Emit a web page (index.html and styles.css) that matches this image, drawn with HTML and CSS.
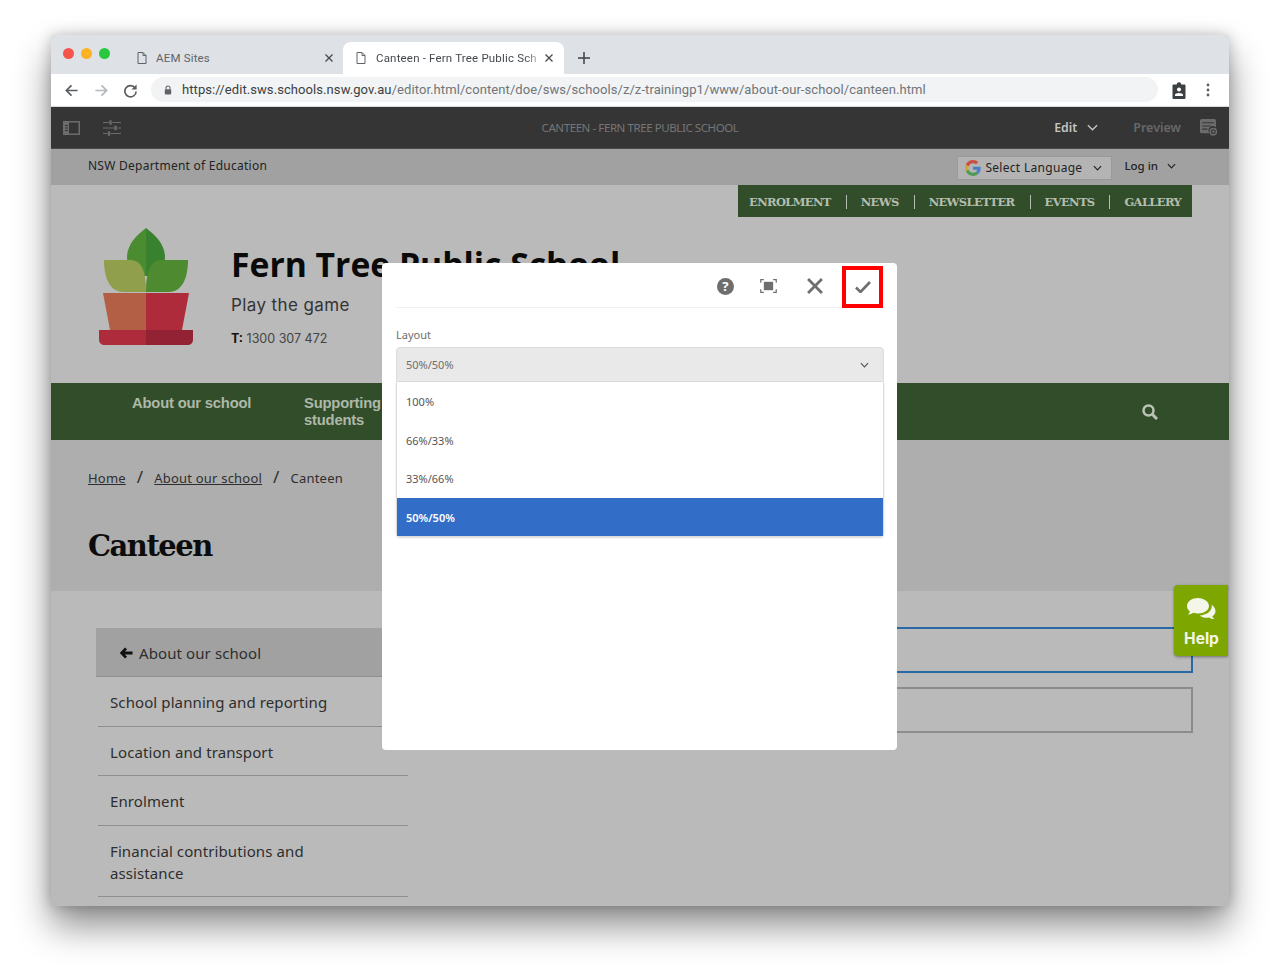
FILE: index.html
```html
<!DOCTYPE html>
<html lang="en">
<head>
  <meta charset="UTF-8" />
  <meta name="viewport" content="width=device-width, initial-scale=1.0"/>
  <title>Canteen - Fern Tree Public School</title>
  <link rel="stylesheet" href="styles.css">
</head>
<body>

  <div class="window">

    <div class="tabstrip">
      <div class="lights">
        <span class="light red"></span>
        <span class="light yellow"></span>
        <span class="light green"></span>
      </div>
      <div class="tab">
        <svg class="doc" viewBox="0 0 10 12"><path d="M1 .5h5l3 3v8H1zM6 .5v3h3" fill="none" stroke="#5f6368"/></svg>
        <span class="tab-title">AEM Sites</span>
        <svg class="tab-x" viewBox="0 0 8 8"><path d="M.5.5l7 7M7.500.5l-7 7" stroke="#45494d" stroke-width="1.300"/></svg>
      </div>
      <div class="tab active">
        <svg class="doc" viewBox="0 0 10 12"><path d="M1 .5h5l3 3v8H1zM6 .5v3h3" fill="none" stroke="#5f6368"/></svg>
        <span class="tab-title">Canteen - Fern Tree Public Sch</span>
        <svg class="tab-x" viewBox="0 0 8 8"><path d="M.5.5l7 7M7.500.5l-7 7" stroke="#45494d" stroke-width="1.300"/></svg>
      </div>
      <svg class="newtab" viewBox="0 0 12 12"><path d="M6 0v12M0 6h12" stroke="#3c4043" stroke-width="1.500"/></svg>
    </div>

    <div class="toolbar">
      <svg class="nav-ic" viewBox="0 0 16 16"><path d="M14.500 8H2.500M8 2.500 2.500 8 8 13.500" fill="none" stroke="#5a5d61" stroke-width="1.800"/></svg>
      <svg class="nav-ic" viewBox="0 0 16 16"><path d="M1.500 8h12M8 2.500 13.500 8 8 13.500" fill="none" stroke="#b4b7bb" stroke-width="1.800"/></svg>
      <svg class="nav-ic reload" viewBox="0 0 16 16"><path d="M13 5.500A6 6 0 1 0 14 9" fill="none" stroke="#5a5d61" stroke-width="1.800"/><path d="M14.500 1.500v5.500H9z" fill="#5a5d61"/></svg>
      <div class="url">
        <svg class="lock" viewBox="0 0 10 12"><path d="M2.500 5V3.500a2.500 2.500 0 0 1 5 0V5" fill="none" stroke="#5f6368" stroke-width="1.300"/><rect x="1" y="5" width="8" height="6.500" rx="1" fill="#5f6368"/></svg>
        <span class="url-text"><span class="url-host">https://edit.sws.schools.nsw.gov.au</span>/editor.html/content/doe/sws/schools/z/z-trainingp1/www/about-our-school/canteen.html</span>
      </div>
      <svg class="clip" viewBox="0 0 14 17"><path d="M1.500 2.500h3.200a2.300 2.300 0 0 1 4.600 0h3.200a1 1 0 0 1 1 1V16a1 1 0 0 1-1 1h-11a1 1 0 0 1-1-1V3.500a1 1 0 0 1 1-1z" fill="#3c4043"/><circle cx="7" cy="7.600" r="2" fill="#fff"/><path d="M3 14v-1.200c0-1.200 2.400-1.900 4-1.900s4 .7 4 1.900V14z" fill="#fff"/></svg>
      <svg class="dots" viewBox="0 0 4 14"><circle cx="2" cy="2" r="1.400" fill="#5a5d61"/><circle cx="2" cy="7" r="1.400" fill="#5a5d61"/><circle cx="2" cy="12" r="1.400" fill="#5a5d61"/></svg>
    </div>

    <div class="editor-bar">
      <svg class="side-ic" viewBox="0 0 17 14"><rect x=".75" y=".75" width="15.500" height="12.500" fill="none" stroke="#6c6c6c" stroke-width="1.500"/><path d="M1 1h5v12H1z" fill="#6c6c6c"/><path d="M2 4.500h3M2 7h3M2 9.500h3" stroke="#353535"/></svg>
      <svg class="slider-ic" viewBox="0 0 18 16"><path d="M0 2.500h18M0 8h18M0 13.500h18" stroke="#6c6c6c" stroke-width="1.200" fill="none"/><path d="M6 0h3v5H6zM11 5.500h3v5h-3zM4.500 11h3v5h-3z" fill="#6c6c6c" stroke="#353535" stroke-width=".6"/></svg>
      <div class="page-name">CANTEEN - FERN TREE PUBLIC SCHOOL</div>
      <span class="edit-btn">Edit</span>
      <svg class="edit-chev" viewBox="0 0 12 7"><path d="M1 1l5 5 5-5" fill="none" stroke="#c4c4c4" stroke-width="1.500"/></svg>
      <span class="preview-btn">Preview</span>
      <svg class="notes-ic" viewBox="0 0 16 16"><path d="M1.500 0h12A1.500 1.500 0 0 1 15 1.500V8a4 4 0 0 0-6 5.500H1.500A1.500 1.500 0 0 1 0 12V1.500A1.500 1.500 0 0 1 1.500 0z" fill="#6c6c6c"/><path d="M2 3.500h11M2 6.500h8M2 9.500h5" stroke="#353535"/><circle cx="12.500" cy="12" r="3" fill="none" stroke="#6c6c6c" stroke-width="1.300"/><path d="M12.500 10.500v3M11 12h3" stroke="#6c6c6c"/></svg>
    </div>

    <div class="page">
      <div class="topbar">
        <span class="dept">NSW Department of Education</span>
        <div class="lang">
          <svg class="g-logo" viewBox="0 0 48 48"><path fill="#c9503f" d="M24 9.500c3.500 0 6.700 1.300 9.100 3.500l6.800-6.800C35.800 2.400 30.200 0 24 0 14.600 0 6.500 5.400 2.600 13.200l7.900 6.100C12.400 13.700 17.700 9.500 24 9.500z"/><path fill="#4a7fc4" d="M47 24.500c0-1.600-.1-3.100-.4-4.500H24v9h13c-.6 3-2.300 5.500-4.800 7.200l7.700 6c4.500-4.200 7.100-10.300 7.100-17.700z"/><path fill="#d3a62f" d="M10.500 28.700A14.500 14.500 0 0 1 10.500 19.300l-7.900-6.100a24 24 0 0 0 0 21.600z"/><path fill="#4f9a55" d="M24 48c6.500 0 11.900-2.100 15.900-5.800l-7.700-6c-2.200 1.400-4.900 2.300-8.200 2.300-6.300 0-11.600-4.200-13.500-9.800l-7.900 6.100C6.500 42.600 14.600 48 24 48z"/></svg>
          <span class="lang-text">Select Language</span>
          <svg class="mini-chev" viewBox="0 0 10 6"><path d="M1 1l4 4 4-4" fill="none" stroke="#222" stroke-width="1.300"/></svg>
        </div>
        <span class="login">Log in</span>
        <svg class="mini-chev" viewBox="0 0 10 6"><path d="M1 1l4 4 4-4" fill="none" stroke="#222" stroke-width="1.300"/></svg>
      </div>

      <div class="quicklinks-row">
        <ul class="quicklinks">
          <li>ENROLMENT</li>
          <li>NEWS</li>
          <li>NEWSLETTER</li>
          <li>EVENTS</li>
          <li>GALLERY</li>
        </ul>
      </div>

      <div class="masthead">
        <svg class="school-logo" viewBox="0 0 94 117">
          <path d="M47 0C38 7 29 15 28 28c0 8 3 14 8 20h11z" fill="#4c8c31"/>
          <path d="M47 0c9 7 18 15 19 28 0 8-3 14-8 20H47z" fill="#38812f"/>
          <path d="M5 32h26c10 0 16 8 16 32H24C11 64 5 50 5 32z" fill="#8f9f4c"/>
          <path d="M89 32H63c-10 0-16 8-16 32h23c13 0 19-14 19-32z" fill="#4e8b30"/>
          <path d="M4 65h43v37H11z" fill="#b35f46"/>
          <path d="M90 65H47v37h36z" fill="#ae2b3c"/>
          <path d="M0 102h47v15H6c-4 0-6-2-6-6z" fill="#ae2b3c"/>
          <path d="M94 102H47v15h41c4 0 6-2 6-6z" fill="#932334"/>
        </svg>
        <div class="school-info">
          <div class="school-name">Fern Tree Public School</div>
          <div class="school-motto">Play the game</div>
          <div class="school-phone"><b>T:</b> 1300 307 472</div>
        </div>
      </div>

      <div class="mainnav">
        <div class="mainnav-item first">About our school</div>
        <div class="mainnav-item">Supporting<br>students</div>
        <svg class="search-ic" viewBox="0 0 16 16"><circle cx="6.500" cy="6.500" r="5" fill="none" stroke="#b9c4b4" stroke-width="2.500"/><path d="M10.500 10.500 15 15" stroke="#b9c4b4" stroke-width="3"/></svg>
      </div>

      <div class="title-band">
        <div class="crumbs">
          <a>Home</a><span class="sep">/</span><a>About our school</a><span class="sep">/</span><span>Canteen</span>
        </div>
        <h1>Canteen</h1>
      </div>

      <div class="body-grid">
        <div class="sidenav">
          <div class="sidenav-head">
            <svg class="back-ic" viewBox="0 0 14 12"><path d="M6.500 1 1.800 6l4.700 5M2 6H13.500" fill="none" stroke="#111" stroke-width="3"/></svg>
            About our school
          </div>
          <div class="sidenav-item">School planning and reporting</div>
          <div class="sidenav-item">Location and transport</div>
          <div class="sidenav-item">Enrolment</div>
          <div class="sidenav-item">Financial contributions and<br>assistance</div>
        </div>
        <div class="content">
          <div class="parsys selected"></div>
          <div class="parsys"></div>
        </div>
      </div>
    </div>

    <div class="help">
      <svg class="help-ic" viewBox="0 0 29 23"><path d="M11 0C5 0 0 3.400 0 8c0 2.200 1.100 4 2.900 5.400C2.600 14.700 1.800 15.700.5 16.400c2.300.1 4.300-.6 5.700-1.700 1.400.5 3 .8 4.800.8 6 0 11-3.300 11-7.500S17 0 11 0z" fill="#f3f6e8"/><path d="M24.500 6.700c.2.500.3 1 .3 1.500 0 5.100-5.500 8.900-12.200 9.200 1.800 1.600 4.300 2.400 6.900 2.400 1 0 2-.1 2.900-.4 1.300 1.100 3 1.700 5.100 1.600-1.100-.6-1.900-1.600-2.200-2.800 2.100-1.300 3.200-3 3.200-5 0-2.600-1.600-4.900-4-6.500z" fill="#f3f6e8"/></svg>
      <span class="help-label">Help</span>
    </div>

    <div class="dialog">
      <div class="dialog-head">
        <svg class="dlg-help" viewBox="0 0 18 18"><circle cx="9" cy="9" r="9" fill="#6e6e6e"/><text class="dlg-q" x="9" y="14" text-anchor="middle">?</text></svg>
        <svg class="dlg-fit" viewBox="0 0 18 15"><rect x="4" y="3" width="10" height="9" fill="#6e6e6e"/><path d="M.7 4V.7H4M14 .7h3.300V4M17.300 11v3.300H14M4 14.300H.7V11" fill="none" stroke="#6e6e6e" stroke-width="1.300"/></svg>
        <svg class="dlg-close" viewBox="0 0 15 15"><path d="M1 1l13 13M14 1 1 14" stroke="#6e6e6e" stroke-width="2.600"/></svg>
        <div class="dlg-ok">
          <svg class="dlg-check" viewBox="0 0 16 12"><path d="M1 6.500 5.500 11 15 1" fill="none" stroke="#6e6e6e" stroke-width="2.600"/></svg>
        </div>
      </div>
      <div class="field-label">Layout</div>
      <div class="select-btn">
        <span>50%/50%</span>
        <svg class="select-chev" viewBox="0 0 10 6"><path d="M1 1l4 4 4-4" fill="none" stroke="#555" stroke-width="1.300"/></svg>
      </div>
      <ul class="select-list">
        <li>100%</li>
        <li>66%/33%</li>
        <li>33%/66%</li>
        <li class="chosen">50%/50%</li>
      </ul>
    </div>

  </div>

</body>
</html>
```

FILE: styles.css
```css
html, body {
  height: 100%;
}
body {
  margin: 0;
  padding: 35px 0 0 51px;
  box-sizing: border-box;
  background: #fff;
  font-family: "Noto Sans", sans-serif;
  color: #333;
  overflow: hidden;
}
.window {
  position: relative;
  width: 1178px;
  height: 871px;
  border-radius: 5px;
  overflow: hidden;
  background: #bababa;
  box-shadow: 0 20px 36px rgba(0, 0, 0, 0.45), 0 0 14px rgba(0, 0, 0, 0.22);
}

/* browser chrome */
.tabstrip {
  display: flex;
  align-items: flex-end;
  height: 39px;
  background: #dee1e6;
}
.lights {
  display: flex;
  gap: 7px;
  align-self: flex-start;
  padding: 13px 0 0 12px;
  width: 64px;
  box-sizing: border-box;
}
.light {
  width: 11px;
  height: 11px;
  border-radius: 50%;
}
.light.red { background: #f5544d; }
.light.yellow { background: #fbb324; }
.light.green { background: #28c93f; }
.tab {
  display: flex;
  align-items: center;
  width: 220px;
  height: 32px;
  padding: 0 0 1px 22px;
  box-sizing: border-box;
  font-family: "Roboto", sans-serif;
  font-size: 11.500px;
  letter-spacing: 0.18px;
  color: #5f6368;
}
.tab.active {
  width: 221px;
  margin-left: 8px;
  padding: 0 9px 1px 13px;
  background: #fff;
  border-radius: 8px 8px 0 0;
  color: #45494d;
}
.doc {
  width: 10px;
  height: 12px;
  margin-right: 9px;
  flex: none;
}
.tab.active .doc {
  margin-right: 10px;
}
.tab-title {
  flex: 1;
  white-space: nowrap;
}
.tab.active .tab-title {
  -webkit-mask-image: linear-gradient(90deg, #000 88%, transparent 100%);
  mask-image: linear-gradient(90deg, #000 88%, transparent 100%);
}
.tab-x {
  width: 8px;
  height: 8px;
  margin-right: 2px;
  flex: none;
}
.newtab {
  width: 12px;
  height: 12px;
  margin: 0 0 10px 14px;
}
.toolbar {
  display: flex;
  align-items: center;
  height: 33px;
  background: #fff;
  padding: 0 0 0 13px;
  box-sizing: border-box;
  border-bottom: 1px solid #d8dade;
}
.nav-ic {
  width: 15px;
  height: 15px;
  margin-right: 15px;
  flex: none;
}
.nav-ic.reload {
  margin: 0 16px 0 -1px;
}
.url {
  display: flex;
  align-items: center;
  width: 1007px;
  height: 25px;
  margin: 0 0 1px -3px;
  padding-left: 13px;
  box-sizing: border-box;
  background: #f1f3f4;
  border-radius: 13px;
}
.lock {
  width: 8px;
  height: 10px;
  margin-right: 10px;
}
.url-text {
  font-family: "Roboto", sans-serif;
  font-size: 13px;
  letter-spacing: 0.08px;
  color: #70757a;
  white-space: nowrap;
}
.url-host { color: #3c4043; }
.clip {
  width: 14px;
  height: 17px;
  margin-left: 14px;
}
.dots {
  width: 4px;
  height: 14px;
  margin-left: 20px;
}

/* editor bar */
.editor-bar {
  position: relative;
  display: flex;
  align-items: center;
  height: 42px;
  background: #353535;
  border-bottom: 1px solid #4a4a4a;
  box-sizing: border-box;
  padding: 0 12px;
}
.side-ic {
  width: 17px;
  height: 14px;
}
.slider-ic {
  width: 18px;
  height: 16px;
  margin-left: 23px;
}
.page-name {
  position: absolute;
  left: 0;
  right: 0;
  text-align: center;
  font-size: 11.500px;
  letter-spacing: -0.42px;
  color: #767676;
}
.edit-btn {
  margin-left: auto;
  font-size: 12.300px;
  font-weight: 600;
  color: #c4c4c4;
}
.edit-chev {
  width: 11px;
  height: 7px;
  margin-left: 10px;
}
.preview-btn {
  margin-left: 35px;
  font-size: 12.500px;
  font-weight: 600;
  color: #686868;
}
.notes-ic {
  width: 17px;
  height: 17px;
  margin-left: 19px;
}

/* site underneath, dimmed by the dialog */
.page {
  background: #bababa;
}
.topbar {
  display: flex;
  align-items: center;
  height: 36px;
  padding: 0 53px 0 37px;
  background: #a1a1a1;
  color: #232323;
  box-sizing: border-box;
}
.dept {
  font-size: 12px;
  letter-spacing: 0.25px;
  margin: 0 auto 3px 0;
}
.lang {
  display: flex;
  align-items: center;
  width: 155px;
  height: 24px;
  margin: 1px 12px 0 0;
  padding-left: 7px;
  box-sizing: border-box;
  background: #b4b4b4;
  border: 1px solid #9a9a9a;
  font-size: 12px;
  letter-spacing: 0.3px;
}
.g-logo {
  width: 16px;
  height: 16px;
  margin-right: 4px;
  flex: none;
}
.lang-text {
  margin-right: 11px;
  white-space: nowrap;
}
.mini-chev {
  width: 9px;
  height: 6px;
}
.login {
  font-size: 11.500px;
  font-weight: 500;
  margin: 0 9px 3px 0;
}
.login + .mini-chev {
  margin-bottom: 3px;
}
.quicklinks-row {
  display: flex;
  justify-content: flex-end;
  padding-right: 37px;
}
.quicklinks {
  display: flex;
  align-items: center;
  height: 32px;
  margin: 0;
  padding: 1px 11px 0;
  box-sizing: border-box;
  list-style: none;
  background: #324d29;
  font-family: "DejaVu Serif", serif;
  font-size: 11.500px;
  font-weight: 700;
  letter-spacing: -0.65px;
  color: #b4beb0;
}
.quicklinks li + li {
  margin-left: 15px;
  padding-left: 14px;
  border-left: 1.500px solid #b4beb0;
  line-height: 14px;
}
.masthead {
  display: flex;
  height: 166px;
  padding: 11px 0 0 48px;
  box-sizing: border-box;
}
.school-logo {
  width: 94px;
  height: 117px;
  flex: none;
}
.school-info {
  margin-left: 38px;
  padding-top: 12px;
}
.school-name {
  font-family: "Open Sans", sans-serif;
  font-size: 33.700px;
  font-weight: 700;
  line-height: 48px;
  color: #0a0a0a;
  white-space: nowrap;
}
.school-motto {
  margin-top: 5px;
  font-family: "Inter", sans-serif;
  font-size: 17px;
  letter-spacing: 0.4px;
  line-height: 24px;
  color: #333;
}
.school-phone {
  margin-top: 12px;
  font-family: "Inter", sans-serif;
  font-size: 12.500px;
  line-height: 20px;
  color: #444;
}
.school-phone b { color: #111; }
.mainnav {
  display: flex;
  align-items: flex-start;
  height: 57px;
  padding: 12px 71px 0 81px;
  box-sizing: border-box;
  background: #324d29;
  font-family: "Liberation Sans", sans-serif;
  font-size: 14.800px;
  font-weight: 700;
  line-height: 17px;
  color: #adb8a9;
  letter-spacing: -0.2px;
}
.mainnav-item.first { width: 172px; }
.search-ic {
  width: 16px;
  height: 16px;
  margin: 9px 0 0 auto;
}
.title-band {
  height: 151px;
  padding: 27px 0 0 37px;
  box-sizing: border-box;
  background: #aeaeae;
}
.crumbs {
  font-size: 13px;
  letter-spacing: 0.2px;
  line-height: 20px;
  color: #2e2e2e;
}
.crumbs a { text-decoration: underline; }
.sep {
  margin: 0 11px;
  font-size: 17px;
}
h1 {
  margin: 37px 0 0;
  font-family: "DejaVu Serif", serif;
  font-size: 29px;
  font-weight: 700;
  letter-spacing: -1.500px;
  line-height: 42px;
  color: #0c0c0c;
}
.body-grid {
  display: flex;
  padding: 37px 36px 0 45px;
}
.sidenav {
  width: 312px;
  flex: none;
  font-size: 15px;
  letter-spacing: 0.1px;
  color: #2e2e2e;
}
.sidenav-head {
  display: flex;
  align-items: center;
  height: 49px;
  padding: 1px 0 0 24px;
  background: #a1a1a1;
  border-bottom: 1px solid #8f8f8f;
  box-sizing: border-box;
}
.back-ic {
  width: 13px;
  height: 12px;
  margin-right: 6px;
}
.sidenav-item {
  margin-left: 2px;
  padding: 14px 12px 12.500px;
  line-height: 22px;
  border-bottom: 1px solid #8f8f8f;
}
.content {
  flex: 1;
  padding: 0 0 0 12px;
  margin-top: -1px;
}
.parsys {
  height: 46px;
  border: 2px solid #8c8c8c;
  box-sizing: border-box;
}
.parsys.selected {
  border-color: #2a69a5;
  margin-bottom: 14px;
}

.help {
  position: absolute;
  top: 550px;
  right: 1px;
  display: flex;
  flex-direction: column;
  align-items: center;
  width: 54px;
  height: 71px;
  padding: 13px 0 0 1px;
  box-sizing: border-box;
  background: #7da600;
  border-radius: 4px 0 0 4px;
  box-shadow: 0 1px 3px rgba(0, 0, 0, 0.4);
}
.help-ic {
  width: 29px;
  height: 23px;
  flex: none;
}
.help-label {
  margin-top: 8px;
  font-family: "Inter", sans-serif;
  font-size: 15.500px;
  font-weight: 700;
  line-height: 19px;
  color: #f3f6e8;
}

/* dialog */
.dialog {
  position: absolute;
  left: 331px;
  top: 228px;
  width: 515px;
  height: 487px;
  padding: 0 13px 0 14px;
  box-sizing: border-box;
  background: #fff;
  border-radius: 4px;
}
.dialog-head {
  display: flex;
  align-items: flex-start;
  justify-content: flex-end;
  height: 44px;
  border-bottom: 1px solid #f0f0f0;
}
.dlg-help {
  width: 17px;
  height: 17px;
  margin: 15px 26px 0 0;
}
.dlg-q {
  font-family: "Open Sans", sans-serif;
  font-size: 14px;
  font-weight: 700;
  fill: #fff;
}
.dlg-fit {
  width: 17px;
  height: 14px;
  margin: 16px 30px 0 0;
}
.dlg-close {
  width: 16px;
  height: 16px;
  margin: 15px 19px 0 0;
}
.dlg-ok {
  display: flex;
  align-items: center;
  justify-content: center;
  width: 41px;
  height: 42px;
  margin: 3px 1px 0 0;
  border: 4px solid #f00;
  box-sizing: border-box;
  flex: none;
}
.dlg-check {
  width: 16px;
  height: 12px;
}
.field-label {
  margin-top: 20px;
  font-size: 11px;
  line-height: 14px;
  color: #6e6e6e;
}
.select-btn {
  display: flex;
  align-items: center;
  justify-content: space-between;
  height: 35px;
  margin-top: 5px;
  padding: 0 14px 0 9px;
  box-sizing: border-box;
  background: #e9e9e9;
  border: 1px solid #dcdcdc;
  border-radius: 4px 4px 0 0;
  font-size: 11px;
  color: #6e6e6e;
}
.select-chev {
  width: 9px;
  height: 6px;
}
.select-list {
  margin: 0;
  padding: 0;
  list-style: none;
  border: 1px solid #dcdcdc;
  border-top: 0;
  border-radius: 0 0 4px 4px;
  box-shadow: 0 1px 2px rgba(0, 0, 0, 0.15);
  font-size: 11px;
  color: #555;
}
.select-list li {
  height: 38.500px;
  padding: 13px 9px 0;
  box-sizing: border-box;
  line-height: 14px;
}
.select-list li.chosen {
  background: #326ec8;
  color: #fff;
  font-weight: 600;
}
```
